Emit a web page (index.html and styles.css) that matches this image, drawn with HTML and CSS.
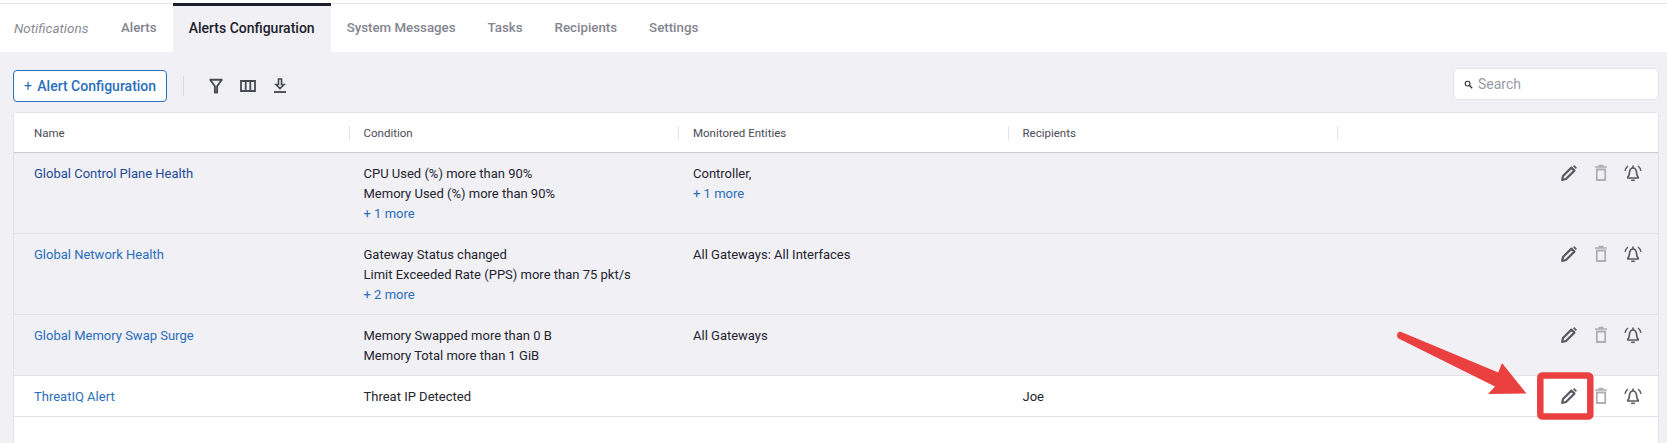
FILE: index.html
```html
<!DOCTYPE html>
<html lang="en">
<head>
    <meta charset="UTF-8">
    <meta name="viewport" content="width=device-width, initial-scale=1.0">
    <title>Alerts Configuration</title>
    <link rel="stylesheet" href="styles.css">
</head>
<body>
    <svg width="0" height="0" class="defs">
        <symbol id="icon-edit" viewBox="0 0 18 18">
            <path d="M2.200 15.800l.8-3.800 8.400-8.400 3 3L6 15z" fill="none" stroke="currentColor" stroke-width="2.200" stroke-linejoin="round"/>
            <path d="M13 2.200l1.300-1.200 2.700 2.700-1.200 1.300z" fill="currentColor"/>
        </symbol>
        <symbol id="icon-trash" viewBox="0 0 18 18">
            <path d="M4.800 5.500h8.400v10.500H4.800z" fill="none" stroke="currentColor" stroke-width="1.800"/>
            <path d="M3 3h12M6.500 1.500h5" fill="none" stroke="currentColor" stroke-width="1.500"/>
        </symbol>
        <symbol id="icon-bell" viewBox="0 0 18 18">
            <path d="M3.800 14v-.8c1.300-1 1.500-2.600 1.600-4.400C5.600 6 6.800 4 9 4s3.400 2 3.600 4.800c.1 1.800.3 3.400 1.600 4.400v.8z" fill="none" stroke="currentColor" stroke-width="1.700" stroke-linejoin="round"/>
            <path d="M9 1.500v2.500" stroke="currentColor" stroke-width="1.600"/>
            <path d="M7.200 16.300h3.600" stroke="currentColor" stroke-width="1.600"/>
            <path d="M4 2C2.500 3.100 1.400 4.800 1 6.800M14 2c1.500 1.100 2.600 2.800 3 4.800" fill="none" stroke="currentColor" stroke-width="1.400"/>
        </symbol>
    </svg>

    <nav class="tabs">
        <span class="tabs-title">Notifications</span>
        <a class="tab">Alerts</a>
        <a class="tab tab-active">Alerts Configuration</a>
        <a class="tab">System Messages</a>
        <a class="tab">Tasks</a>
        <a class="tab">Recipients</a>
        <a class="tab">Settings</a>
    </nav>

    <main class="content">
        <div class="toolbar">
            <button class="btn-add"><span class="plus">+</span> Alert Configuration</button>
            <span class="toolbar-sep"></span>
            <svg class="tool" viewBox="0 0 16 16"><path d="M1.500 1.800h13M2.200 1.800L6.900 8.300v6.200h2.200V8.300l4.700-6.500" fill="none" stroke="currentColor" stroke-width="1.900" stroke-linejoin="round"/></svg>
            <svg class="tool" viewBox="0 0 16 16"><path d="M1 3h14v10H1z M5.700 3v10 M10.300 3v10" fill="none" stroke="currentColor" stroke-width="1.800"/></svg>
            <svg class="tool" viewBox="0 0 16 16"><path d="M6.500 1h3v5.500h2.500L8 10.500 4 6.500h2.500z" fill="none" stroke="currentColor" stroke-width="1.600"/><path d="M2 14h12" stroke="currentColor" stroke-width="1.900"/></svg>
            <label class="search">
                <svg class="search-icon" viewBox="0 0 12 12"><circle cx="4.800" cy="4.800" r="3.200" fill="none" stroke="currentColor" stroke-width="1.500"/><path d="M7.200 7.200L11 11" stroke="currentColor" stroke-width="1.800"/></svg>
                <span>Search</span>
            </label>
        </div>

        <section class="table">
            <div class="row row-head">
                <div class="cell">Name</div>
                <div class="cell">Condition</div>
                <div class="cell">Monitored Entities</div>
                <div class="cell">Recipients</div>
                <div class="cell"></div>
            </div>

            <div class="row">
                <div class="cell"><a class="link link-dark">Global Control Plane Health</a></div>
                <div class="cell">CPU Used (%) more than 90%<br>Memory Used (%) more than 90%<br><a class="link">+ 1 more</a></div>
                <div class="cell">Controller,<br><a class="link">+ 1 more</a></div>
                <div class="cell"></div>
                <div class="cell actions">
                    <svg class="act"><use href="#icon-edit"/></svg>
                    <svg class="act act-off"><use href="#icon-trash"/></svg>
                    <svg class="act"><use href="#icon-bell"/></svg>
                </div>
            </div>

            <div class="row">
                <div class="cell"><a class="link">Global Network Health</a></div>
                <div class="cell">Gateway Status changed<br>Limit Exceeded Rate (PPS) more than 75 pkt/s<br><a class="link">+ 2 more</a></div>
                <div class="cell">All Gateways: All Interfaces</div>
                <div class="cell"></div>
                <div class="cell actions">
                    <svg class="act"><use href="#icon-edit"/></svg>
                    <svg class="act act-off"><use href="#icon-trash"/></svg>
                    <svg class="act"><use href="#icon-bell"/></svg>
                </div>
            </div>

            <div class="row">
                <div class="cell"><a class="link">Global Memory Swap Surge</a></div>
                <div class="cell">Memory Swapped more than 0 B<br>Memory Total more than 1 GiB</div>
                <div class="cell">All Gateways</div>
                <div class="cell"></div>
                <div class="cell actions">
                    <svg class="act"><use href="#icon-edit"/></svg>
                    <svg class="act act-off"><use href="#icon-trash"/></svg>
                    <svg class="act"><use href="#icon-bell"/></svg>
                </div>
            </div>

            <div class="row row-white">
                <div class="cell"><a class="link">ThreatIQ Alert</a></div>
                <div class="cell">Threat IP Detected</div>
                <div class="cell"></div>
                <div class="cell">Joe</div>
                <div class="cell actions">
                    <svg class="act"><use href="#icon-edit"/></svg>
                    <svg class="act act-off"><use href="#icon-trash"/></svg>
                    <svg class="act"><use href="#icon-bell"/></svg>
                </div>
            </div>
        </section>
    </main>

    <!-- red annotation on top of the screenshot -->
    <svg class="annotation" viewBox="0 0 1667 443">
        <path d="M1397.500 333.300c.8-1.500 2.200-1.900 3.700-1.300L1498.300 372.500 1502 363 1526.500 393.500 1488 394 1495 386.500 1398.500 338.500c-1.500-.8-1.800-3.600-1-5.200z" fill="#ea4040"/>
        <rect x="1540.300" y="375.500" width="50" height="41" rx="2" fill="none" stroke="#ea4040" stroke-width="6.500"/>
    </svg>
</body>
</html>
```

FILE: styles.css
```css
* {
    box-sizing: border-box;
}

html, body {
    margin: 0;
    height: 100%;
    overflow: hidden;
}

body {
    font-family: "Roboto", "Noto Sans", sans-serif;
    font-size: 13px;
    line-height: 20px;
    color: #24242e;
    background-color: #f0f0f5;
    display: flex;
    flex-direction: column;
}

.defs {
    position: absolute;
}

/* tabs */
.tabs {
    display: flex;
    align-items: stretch;
    height: 52px;
    padding-top: 3px;
    background-color: #fff;
    box-shadow: inset 0 3px 0 #fff, inset 0 4px 0 #e4e4e8;
    font-size: 13.3px;
    font-weight: 500;
    color: #84848f;
}

.tabs-title {
    width: 105px;
    padding: 2px 0 0 14px;
    line-height: 46px;
    font-size: 13.5px;
    font-weight: 400;
    font-style: italic;
    color: #8a8a94;
}

.tab {
    padding: 2px 16px 0;
    line-height: 46px;
}

.tab-active {
    background-color: #f0f0f5;
    border-top: 3px solid #1d1d2c;
    padding-top: 0;
    line-height: 45px;
    font-size: 14px;
    color: #1d1d2c;
}

/* toolbar */
.content {
    flex: 1;
    display: flex;
    flex-direction: column;
    padding: 16px 8px 0 13px;
}

.toolbar {
    display: flex;
    align-items: center;
    height: 32px;
    margin-bottom: 12px;
    color: #4a4a55;
}

.btn-add {
    width: 154px;
    height: 32px;
    margin: 3px 0 0;
    padding: 0;
    background-color: #fff;
    border: 1px solid #2a6ebb;
    border-radius: 4px;
    font-family: inherit;
    font-size: 14px;
    font-weight: 500;
    color: #2a6ebb;
    cursor: pointer;
}

.plus {
    font-weight: 400;
    margin-right: 2px;
}

.toolbar-sep {
    width: 1px;
    height: 20px;
    margin: 3px 24px 0 16px;
    background-color: #dcdce2;
}

.tool {
    width: 16px;
    height: 16px;
    margin: 3px 16px 0 0;
}

.search {
    display: flex;
    align-items: center;
    gap: 5px;
    width: 206px;
    height: 32px;
    margin-left: auto;
    padding-left: 10px;
    background-color: #fff;
    border: 1px solid #e2e2e8;
    border-radius: 4px;
    font-size: 14px;
    color: #9a9aa3;
}

.search-icon {
    width: 9px;
    height: 9px;
    color: #33333d;
}

/* table */
.table {
    flex: 1;
    background-color: #fff;
    border: 1px solid #e2e2e8;
    border-bottom: 0;
    border-radius: 4px 4px 0 0;
}

.row {
    display: grid;
    grid-template-columns: 329.5px 329.5px 329.5px 329.5px 1fr;
    padding: 0 0 0 6px;
    background-color: #f0f0f5;
    border-bottom: 1px solid #e2e2e8;
}

.row-white {
    background-color: #fff;
}

.row-head {
    height: 40px;
    align-items: center;
    background-color: #fff;
    border-bottom: 1px solid #c9c9d2;
    font-size: 11.5px;
    color: #4a4a55;
}

.row-head .cell {
    height: 14px;
    line-height: 14px;
    padding-top: 0;
    padding-bottom: 0;
    border-right: 1px solid #e2e2e8;
}

.row-head .cell:last-child {
    border-right: 0;
}

.cell {
    padding: 11px 14px 9px;
}

.link {
    color: #2a6ebb;
}

.link-dark {
    color: #1f4b96;
}

.actions {
    display: flex;
    justify-content: flex-end;
    gap: 14px;
    padding: 11px 16px 0 0;
}

.act {
    width: 18px;
    height: 18px;
    color: #5a5a63;
}

.act-off {
    color: #aeaeb6;
}

.annotation {
    position: absolute;
    left: 0;
    top: 0;
    width: 1667px;
    height: 443px;
    pointer-events: none;
}
```
